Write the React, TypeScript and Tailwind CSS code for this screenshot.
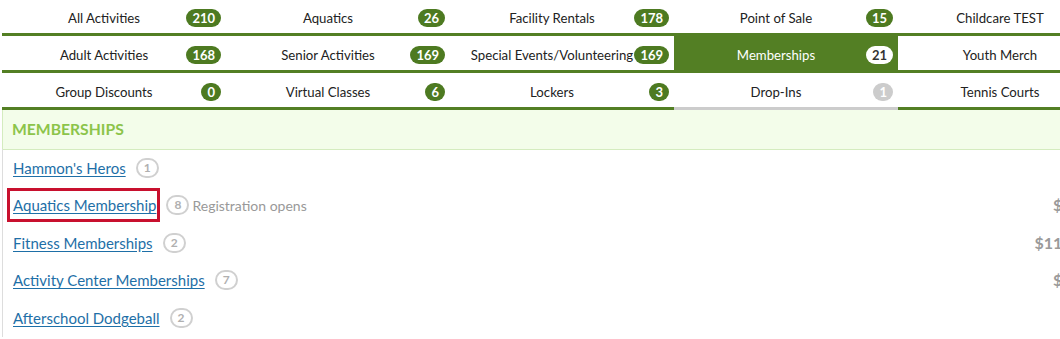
import React from "react";

type Tab = { label: string; count?: number; active?: boolean; disabled?: boolean };

const rows: Tab[][] = [
  [
    { label: "All Activities", count: 210 },
    { label: "Aquatics", count: 26 },
    { label: "Facility Rentals", count: 178 },
    { label: "Point of Sale", count: 15 },
    { label: "Childcare TEST" },
  ],
  [
    { label: "Adult Activities", count: 168 },
    { label: "Senior Activities", count: 169 },
    { label: "Special Events/Volunteering", count: 169 },
    { label: "Memberships", count: 21, active: true },
    { label: "Youth Merch" },
  ],
  [
    { label: "Group Discounts", count: 0 },
    { label: "Virtual Classes", count: 6 },
    { label: "Lockers", count: 3 },
    { label: "Drop-Ins", count: 1, disabled: true },
    { label: "Tennis Courts" },
  ],
];

type Item = { name: string; count: number; note?: string; price?: string; boxed?: boolean };

const items: Item[] = [
  { name: "Hammon's Heros", count: 1 },
  { name: "Aquatics Membership", count: 8, note: "Registration opens", price: "$5.00", boxed: true },
  { name: "Fitness Memberships", count: 2, price: "$115.00" },
  { name: "Activity Center Memberships", count: 7, price: "$5.00" },
  { name: "Afterschool Dodgeball", count: 2 },
];

function TabCell({ t }: { t: Tab }) {
  const cell = t.active
    ? "bg-[#537f24] border-[#537f24] text-white"
    : t.disabled
    ? "bg-white border-[#cccccc] text-[#222222]"
    : "bg-white border-[#537f24] text-[#222222]";
  const badge = t.active
    ? "bg-white text-[#333333]"
    : t.disabled
    ? "bg-[#cccccc] text-white"
    : "bg-[#4d7a21] text-white";
  return (
    <div className={`relative h-[37px] border-b-[3px] ${cell} flex items-center pr-[20px]`}>
      <span className="flex-1 text-center text-[13.2px] leading-[18px] whitespace-nowrap pt-[3px]">{t.label}</span>
      {t.count !== undefined && (
        <span
          className={`absolute right-[5px] top-[10px] h-[18px] min-w-[18px] px-[6px] rounded-full text-[13px] font-bold leading-[18px] text-center ${badge}`}
        >
          {t.count}
        </span>
      )}
    </div>
  );
}

export default function App() {
  return (
    <div
      className="w-[1060px] h-[339px] overflow-hidden bg-white"
      style={{ fontFamily: "Lato, 'Noto Sans', sans-serif" }}
    >
      <div className="w-[1120px] ml-[2px] -mt-[1px]">
        {rows.map((r, i) => (
          <div key={i} className="grid grid-cols-5">
            {r.map((t, j) => (
              <TabCell key={j} t={t} />
            ))}
          </div>
        ))}
        <div className="border-l-[1px] border-[#d4ecbf] bg-[#f3fdea] border-b-[1px] h-[40px] flex items-center pl-[9px]">
          <span className="text-[15.7px] font-bold text-[#8cc44a]">MEMBERSHIPS</span>
        </div>
        <div className="border-l-[1px] border-[#dddddd] -mt-[1px]">
          {items.map((it, i) => (
            <div key={i} className="h-[37.5px] flex items-center pl-[10px] pr-[28px]">
              <span className="relative inline-block leading-[18px] h-[18px]">
                <a
                  href="#"
                  className="text-[15px] leading-[18px] text-[#1e6fa7] underline underline-offset-[2px]"
                >
                  {it.name}
                </a>
                {it.boxed && (
                  <span className="absolute -left-[6px] -right-[4px] -top-[8px] -bottom-[8px] border-[3px] border-[#c8102e] pointer-events-none" />
                )}
              </span>
              <span className="ml-[10px] inline-flex items-center justify-center h-[20px] min-w-[23px] px-[5px] rounded-full border-2 border-[#d0d0d0] text-[12px] font-bold text-[#b0b0b0] leading-none">
                {it.count}
              </span>
              {it.note && <span className="ml-[3px] text-[14px] text-[#999999]">{it.note}</span>}
              {it.price && (
                <span className="ml-auto text-[16px] font-bold text-[#9a9a9a]">{it.price}</span>
              )}
            </div>
          ))}
        </div>
      </div>
    </div>
  );
}
